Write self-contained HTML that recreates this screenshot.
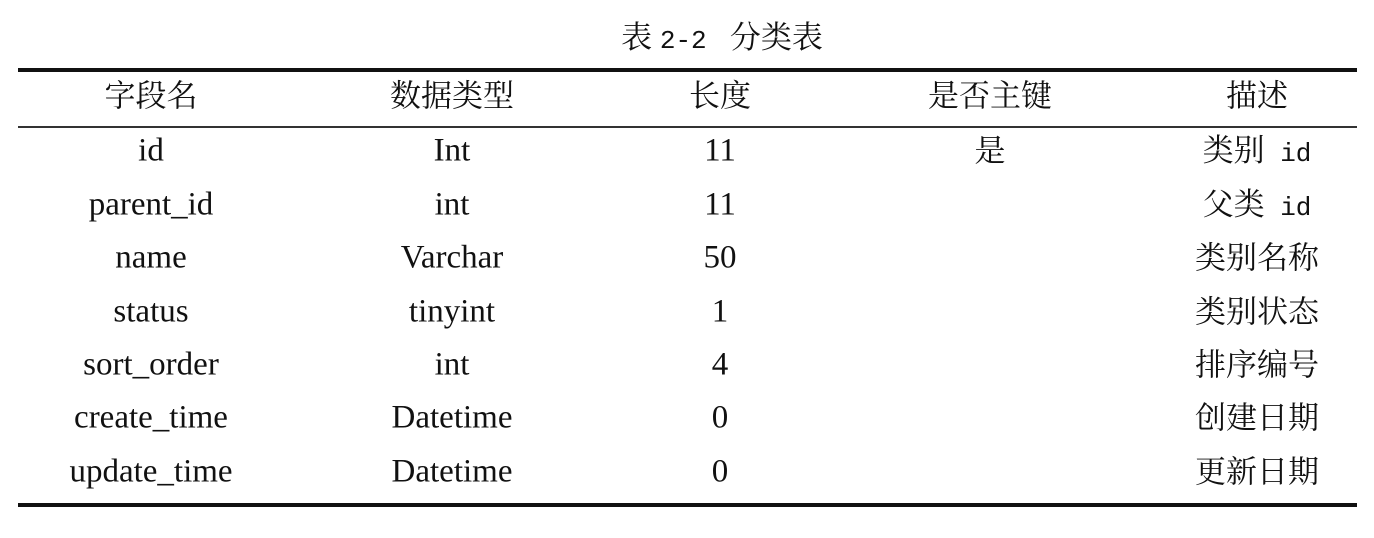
<!DOCTYPE html>
<html><head><meta charset="utf-8"><style>
html,body{margin:0;padding:0;background:#fff;width:1374px;height:538px;overflow:hidden;position:relative}
.t{position:absolute;white-space:nowrap;transform:translate(-50%,-50%);font-family:"Liberation Serif","Noto Serif CJK SC",serif;font-size:33px;color:#111;line-height:1}
.c{font-size:31px}
.m{font-family:"Liberation Mono","Noto Serif CJK SC",monospace;font-size:26px}
.line{position:absolute;left:18px;width:1339px;background:#111}
</style></head><body>
<div class="t c" style="left:722px;top:38px">表 <span class="m">2-2</span>&nbsp;&nbsp; 分类表</div>
<div class="line" style="top:68px;height:4px"></div>
<div class="line" style="top:126px;height:2px;background:#333"></div>
<div class="line" style="top:503px;height:4px"></div>

<div class="t c" style="left:151px;top:96px">字段名</div>
<div class="t c" style="left:452px;top:96px">数据类型</div>
<div class="t c" style="left:720px;top:96px">长度</div>
<div class="t c" style="left:990px;top:96px">是否主键</div>
<div class="t c" style="left:1257px;top:96px">描述</div>

<div class="t" style="left:151px;top:151px">id</div>
<div class="t" style="left:452px;top:151px">Int</div>
<div class="t" style="left:720px;top:151px">11</div>
<div class="t c" style="left:990px;top:151px">是</div>
<div class="t c" style="left:1257px;top:151px">类别<span class="m"> id</span></div>

<div class="t" style="left:151px;top:205px">parent_id</div>
<div class="t" style="left:452px;top:205px">int</div>
<div class="t" style="left:720px;top:205px">11</div>
<div class="t c" style="left:1257px;top:205px">父类<span class="m"> id</span></div>

<div class="t" style="left:151px;top:258px">name</div>
<div class="t" style="left:452px;top:258px">Varchar</div>
<div class="t" style="left:720px;top:258px">50</div>
<div class="t c" style="left:1257px;top:258px">类别名称</div>

<div class="t" style="left:151px;top:312px">status</div>
<div class="t" style="left:452px;top:312px">tinyint</div>
<div class="t" style="left:720px;top:312px">1</div>
<div class="t c" style="left:1257px;top:312px">类别状态</div>

<div class="t" style="left:151px;top:365px">sort_order</div>
<div class="t" style="left:452px;top:365px">int</div>
<div class="t" style="left:720px;top:365px">4</div>
<div class="t c" style="left:1257px;top:365px">排序编号</div>

<div class="t" style="left:151px;top:418px">create_time</div>
<div class="t" style="left:452px;top:418px">Datetime</div>
<div class="t" style="left:720px;top:418px">0</div>
<div class="t c" style="left:1257px;top:418px">创建日期</div>

<div class="t" style="left:151px;top:472px">update_time</div>
<div class="t" style="left:452px;top:472px">Datetime</div>
<div class="t" style="left:720px;top:472px">0</div>
<div class="t c" style="left:1257px;top:472px">更新日期</div>
</body></html>
